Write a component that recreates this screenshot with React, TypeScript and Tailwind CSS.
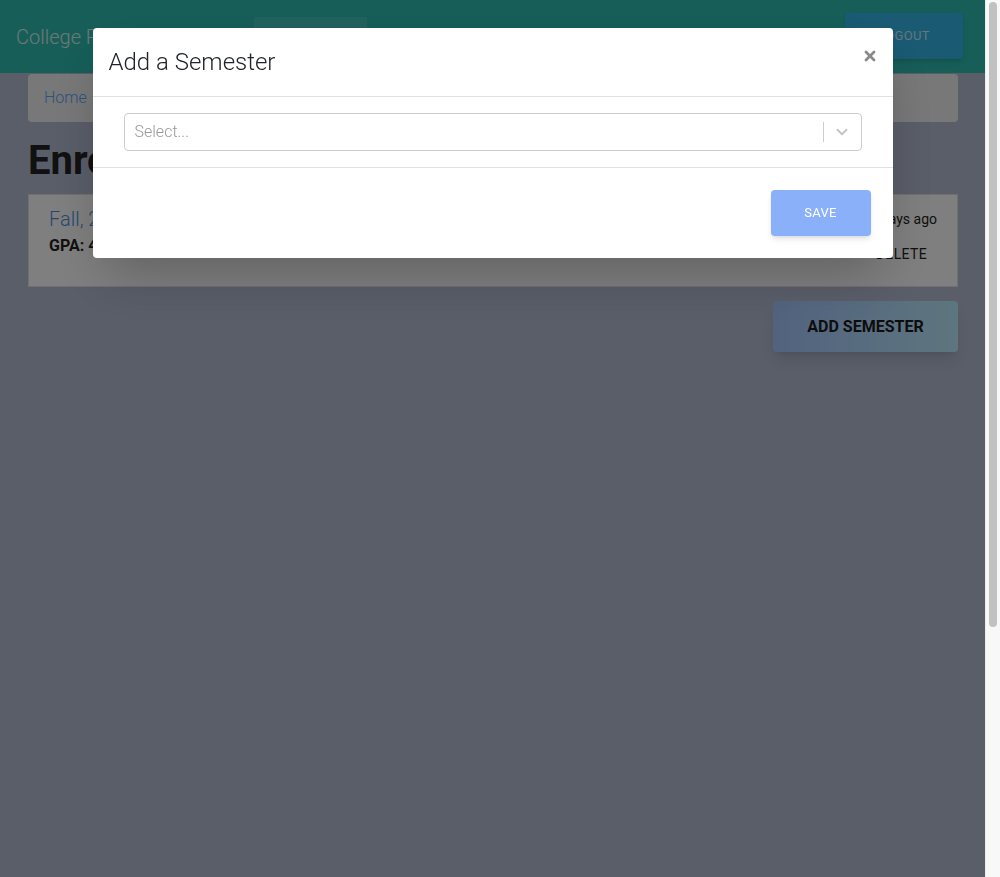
import { X, ChevronDown } from "lucide-react";

export default function App() {
  return (
    <div className="h-screen flex bg-[#b4bcd2] font-['Roboto',sans-serif] text-[#212529] overflow-hidden">
      <div className="flex-1 min-w-0">
        {/* Navbar */}
        <nav className="h-[73px] bg-[#2ebcb0] flex items-center pl-4 pr-[22px]">
          <span className="text-[20px] font-light text-white/80 w-[238px]">College Planner</span>
          <div className="self-end h-[56px] w-[113px] bg-white/10 flex items-center justify-center text-white/80 text-sm">
            Semesters
          </div>
          <div className="flex-1" />
          <button className="h-[46px] w-[118px] -mt-[2px] bg-[#34b4e6] rounded-sm shadow-md text-white/75 text-[13px] tracking-wide">
            LOGOUT
          </button>
        </nav>

        <main className="px-[27px] pl-[28px]">
          {/* Breadcrumb */}
          <div className="mt-px h-[48px] bg-[#f0f0f0] rounded flex items-center px-4 text-[16px] font-light">
            <a href="#" className="text-[#5aa6ff]">Home</a>
          </div>

          <h1 className="mt-[15px] text-[40px] font-bold leading-[48px] text-[#222]">Enrolled Semesters</h1>

          {/* Semester card */}
          <div className="mt-[9px] h-[93px] bg-white border border-[#e0e0e0] flex justify-between px-5 pt-[12px]">
            <div>
              <div className="text-[20px] font-light text-[#4a90e2] leading-6">Fall, 2019</div>
              <div className="mt-[3px] text-[16px] font-bold text-[#222]">GPA: 4.00</div>
            </div>
            <div className="flex flex-col items-end">
              <div className="text-[14px] text-[#222] leading-5 mt-[2px]">Updated 3 days ago</div>
              <button className="mt-[15px] mr-[10px] text-[14px] text-[#222] tracking-wide">DELETE</button>
            </div>
          </div>

          <div className="flex justify-end mt-[14px]">
            <button className="h-[51px] w-[185px] bg-gradient-to-r from-[#a6c6fe] to-[#bcecff] shadow-lg text-[16px] font-bold text-[#1b1b1b] rounded-sm">
              ADD SEMESTER
            </button>
          </div>
        </main>
      </div>

      {/* Scrollbar */}
      <aside className="w-[15px] shrink-0 bg-[#f8f8f8] border-l border-[#ececec] pt-[2px] pl-[3px] pr-[3px]">
        <div className="h-[625px] rounded-full bg-[#c1c1c1]" />
      </aside>

      {/* Modal */}
      <div className="fixed top-0 bottom-0 left-0 right-[15px] bg-black/50 flex justify-center pt-[28px]">
        <div className="w-[800px] h-[230px] bg-white rounded-sm shadow-2xl flex flex-col">
          <div className="h-[69px] border-b border-[#dee2e6] flex items-center justify-between pl-4 pr-[15px]">
            <h2 className="text-[24px] font-light text-[#212529]">Add a Semester</h2>
            <button className="text-[#888] -mt-[12px]">
              <X size={16} strokeWidth={4} />
            </button>
          </div>
          <div className="pt-4 pb-4 pl-[31px] pr-[31px] border-b border-[#dee2e6]">
            <div className="h-[38px] border border-[#cccccc] rounded flex items-center">
              <span className="flex-1 pl-[10px] text-[16px] font-light text-[#999]">Select...</span>
              <span className="w-px h-5 bg-[#cccccc]" />
              <span className="w-[37px] flex justify-center text-[#c4c4c4]">
                <ChevronDown size={18} strokeWidth={2.5} />
              </span>
            </div>
          </div>
          <div className="flex-1 flex justify-end items-start pt-[22px] pr-[22px]">
            <button className="w-[100px] h-[46px] bg-[#89b0f8] rounded-sm shadow-md text-white text-[13px] tracking-wide">
              SAVE
            </button>
          </div>
        </div>
      </div>
    </div>
  );
}
